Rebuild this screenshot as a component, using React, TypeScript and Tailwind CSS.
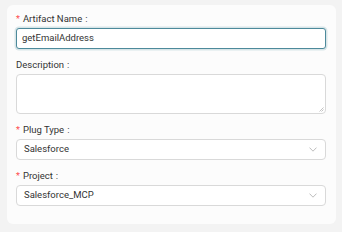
import React from "react";

function Label({ text, required }: { text: string; required?: boolean }) {
  return (
    <div className="h-[18px] flex items-center text-[9.5px] text-[#333333] leading-none">
      {required && <span className="text-[#ff4d4f] mr-[3px] text-[9px]">*</span>}
      <span>{text}</span>
      <span className="ml-[3px]">:</span>
    </div>
  );
}

function Chevron() {
  return (
    <svg width="8" height="5" viewBox="0 0 8 5" fill="none" className="text-[#b5b5b5]">
      <path d="M0.5 0.6 L4 4.2 L7.5 0.6" stroke="currentColor" strokeWidth="0.9" />
    </svg>
  );
}

function Select({ value }: { value: string }) {
  return (
    <div className="h-[21px] w-full rounded-[4px] border border-[#d9d9d9] bg-white flex items-center justify-between pl-[7px] pr-[8px] text-[9.5px] text-[#333333]">
      <span>{value}</span>
      <Chevron />
    </div>
  );
}

export default function App() {
  return (
    <div
      className="w-[342px] h-[232px] bg-[#f3f3f3] pt-[5px] pl-[7px] pr-[6px]"
      style={{ fontFamily: "Roboto, 'Liberation Sans', sans-serif" }}
    >
      <div className="h-[219px] rounded-[6px] bg-[#fcfcfc] pt-[5px] pl-[9px] pr-[10px]">
        <div className="flex flex-col">
          <Label text="Artifact Name" required />
          <div className="h-[21px] rounded-[3px] border border-[#4d8a9b] bg-white shadow-[0_0_0_1.5px_rgba(77,138,155,0.2)] flex items-center px-[5px] text-[9.5px] text-[#333333]">
            getEmailAddress
          </div>
          <div className="h-[7px]" />
          <Label text="Description" />
          <div className="relative h-[40px] rounded-[4px] border border-[#d9d9d9] bg-white">
            <svg width="5" height="5" viewBox="0 0 5 5" className="absolute right-[1px] bottom-[1px]">
              <path d="M4.5 0.5 L0.5 4.5 M4.5 2.5 L2.5 4.5" stroke="#9a9a9a" strokeWidth="0.6" />
            </svg>
          </div>
          <div className="h-[7px]" />
          <Label text="Plug Type" required />
          <Select value="Salesforce" />
          <div className="h-[7px]" />
          <Label text="Project" required />
          <Select value="Salesforce_MCP" />
        </div>
      </div>
    </div>
  );
}
